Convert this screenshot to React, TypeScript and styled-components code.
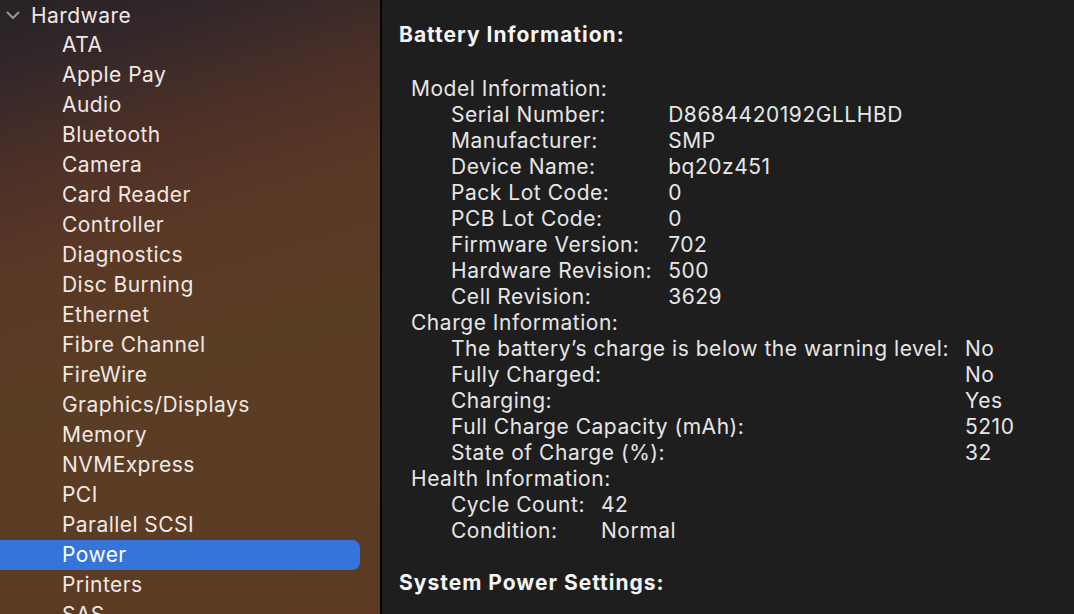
import styled, { createGlobalStyle } from 'styled-components';

const GlobalStyle = createGlobalStyle`
  html, body {
    margin: 0;
    padding: 0;
    height: 100%;
    overflow: hidden;
    background: #1e1e1e;
  }
  #root {
    height: 100%;
  }
`;

interface InfoRow {
  label: string;
  value: string;
}

interface InfoGroup {
  title: string;
  rows: InfoRow[];
}

const categories = [
  'ATA',
  'Apple Pay',
  'Audio',
  'Bluetooth',
  'Camera',
  'Card Reader',
  'Controller',
  'Diagnostics',
  'Disc Burning',
  'Ethernet',
  'Fibre Channel',
  'FireWire',
  'Graphics/Displays',
  'Memory',
  'NVMExpress',
  'PCI',
  'Parallel SCSI',
  'Power',
  'Printers',
  'SAS',
  'SATA',
];

const groups: InfoGroup[] = [
  {
    title: 'Model Information:',
    rows: [
      { label: 'Serial Number:', value: 'D8684420192GLLHBD' },
      { label: 'Manufacturer:', value: 'SMP' },
      { label: 'Device Name:', value: 'bq20z451' },
      { label: 'Pack Lot Code:', value: '0' },
      { label: 'PCB Lot Code:', value: '0' },
      { label: 'Firmware Version:', value: '702' },
      { label: 'Hardware Revision:', value: '500' },
      { label: 'Cell Revision:', value: '3629' },
    ],
  },
  {
    title: 'Charge Information:',
    rows: [
      { label: 'The battery\u2019s charge is below the warning level:', value: 'No' },
      { label: 'Fully Charged:', value: 'No' },
      { label: 'Charging:', value: 'Yes' },
      { label: 'Full Charge Capacity (mAh):', value: '5210' },
      { label: 'State of Charge (%):', value: '32' },
    ],
  },
  {
    title: 'Health Information:',
    rows: [
      { label: 'Cycle Count:', value: '42' },
      { label: 'Condition:', value: 'Normal' },
    ],
  },
];

const App = () => {
  return (
    <Window>
      <GlobalStyle />
      <Sidebar>
        <List>
          <SectionRow>
            <Chevron width="14" height="9" viewBox="0 0 14 9">
              <polyline points="1.5,1.5 7,7 12.5,1.5" />
            </Chevron>
            Hardware
          </SectionRow>
          {categories.map((name) => (
            <Item key={name} $selected={name === 'Power'}>
              {name}
            </Item>
          ))}
        </List>
      </Sidebar>
      <Content>
        <Heading>Battery Information:</Heading>
        <Groups>
          {groups.map((group) => (
            <Group key={group.title}>
              <GroupTitle>{group.title}</GroupTitle>
              <Table>
                {group.rows.map((row) => (
                  <Pair key={row.label}>
                    <Label>{row.label}</Label>
                    <Value>{row.value}</Value>
                  </Pair>
                ))}
              </Table>
            </Group>
          ))}
        </Groups>
        <Heading>System Power Settings:</Heading>
      </Content>
    </Window>
  );
};

const Window = styled.div`
  display: flex;
  height: 614px;
  width: 1074px;
  overflow: hidden;
  font-family: Inter, 'Noto Sans', 'Liberation Sans', sans-serif;
`;

const Sidebar = styled.nav`
  width: 380px;
  flex: none;
  overflow: hidden;
  border-right: 2px solid #050505;
  background: linear-gradient(
    163deg,
    #262226 0%,
    #33272a 10%,
    #4c3027 24%,
    #5a3826 38%,
    #5a3d25 55%,
    #5b3c24 80%,
    #5e3a22 100%
  );
`;

const List = styled.ul`
  list-style: none;
  margin: 0;
  padding: 0;
`;

const SectionRow = styled.li`
  display: flex;
  align-items: center;
  height: 30px;
  padding-left: 6px;
  gap: 11px;
  font-size: 21px;
  letter-spacing: 0.45px;
  color: #f1e8e4;
`;

const Chevron = styled.svg`
  flex: none;
  margin-top: 1px;
  fill: none;
  stroke: #9c9394;
  stroke-width: 2;
  stroke-linecap: round;
  stroke-linejoin: round;
`;

const Item = styled.li<{ $selected?: boolean }>`
  height: 30px;
  line-height: 30px;
  margin: 0 20px 0 -10px;
  padding-left: 72px;
  border-radius: 8px;
  font-size: 21px;
  letter-spacing: 0.45px;
  color: ${(p) => (p.$selected ? '#ffffff' : '#f1e8e4')};
  background: ${(p) => (p.$selected ? '#3574d8' : 'transparent')};
  white-space: nowrap;
`;

const Content = styled.main`
  flex: 1;
  background: #1e1e1e;
  padding: 21px 0 0 17px;
  color: #e6e6e6;
  font-size: 21px;
  letter-spacing: 0.53px;
`;

const Heading = styled.h2`
  margin: 0;
  height: 28px;
  line-height: 28px;
  font-size: 21px;
  font-weight: 700;
  letter-spacing: 1px;
  color: #f4f4f4;
`;

const Groups = styled.div`
  padding: 27px 0 25px 12px;
`;

const Group = styled.section`
  display: flex;
  flex-direction: column;
`;

const GroupTitle = styled.div`
  height: 26px;
  line-height: 26px;
`;

const Table = styled.div`
  display: grid;
  grid-template-columns: max-content max-content;
  column-gap: 16px;
  padding-left: 40px;
`;

const Pair = styled.div`
  display: contents;
`;

const Label = styled.span`
  height: 26px;
  line-height: 26px;
  white-space: nowrap;
`;

const Value = styled.span`
  height: 26px;
  line-height: 26px;
  white-space: nowrap;
`;

export default App;
